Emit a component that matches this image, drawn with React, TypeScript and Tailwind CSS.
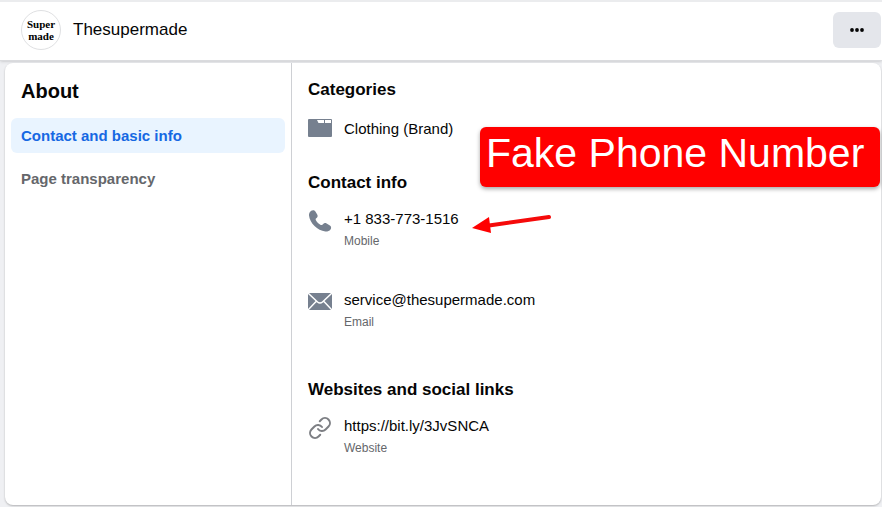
import React from 'react';
import { Link } from 'lucide-react';

interface InfoRowProps {
  icon: React.ReactNode;
  value: React.ReactNode;
  label?: string;
}

const FolderIcon = () => (
  <svg width="24" height="18" viewBox="0 0 24 18" fill="none" aria-hidden="true">
    <path d="M1 0h22a1 1 0 0 1 1 1v16a1 1 0 0 1-1 1H1a1 1 0 0 1-1-1V1a1 1 0 0 1 1-1Z" fill="#76808f" />
    <path d="M9 1h7v3h-5.500ZM17 1h6v3h-6Z" fill="#fff" />
  </svg>
);

const PhoneIcon = () => (
  <svg width="24" height="24" viewBox="0 0 24 24" aria-hidden="true">
    <path
      d="M3.200 1.800C4.500.800 6.500 1 7.400 2.400L9.200 5.400c.8 1.400.5 2.600-.6 3.500l-.7.7c-.4.5-.4 1 0 1.600 1.200 2 2.700 3.500 4.900 4.700.6.300 1.100.3 1.600-.1l.8-.8c.9-1 2.100-1.200 3.400-.4l3.300 2c1.400.9 1.600 2.700.6 3.900-1.200 1.500-3.200 2.200-5.200 2C9.600 21.900 1.700 14 1 6.600.800 4.700 1.700 2.900 3.200 1.800Z"
      fill="#76808f"
    />
  </svg>
);

const MailIcon = () => (
  <svg width="24" height="24" viewBox="0 0 24 24" fill="none" aria-hidden="true">
    <path d="M0 3h24v17H0Z" fill="#76808f" />
    <path d="m0 3 9.500 9q2.500 2 5 0L24 3M0 20l8.500-9M24 20l-8.500-9" stroke="#fff" strokeWidth="1.500" />
  </svg>
);

const InfoRow: React.FC<InfoRowProps> = ({ icon, value, label }) => (
  <div className="flex items-start gap-3">
    <span className="w-6 shrink-0">{icon}</span>
    <div>
      <p className="text-[15px] leading-5 text-[#050505]">{value}</p>
      {label && <p className="mt-1 text-xs leading-4 text-[#65676b]">{label}</p>}
    </div>
  </div>
);

const SectionTitle: React.FC<{ children: React.ReactNode }> = ({ children }) => (
  <h3 className="mb-4 text-[17px] leading-5 font-bold text-[#050505]">{children}</h3>
);

export default function App() {
  return (
    <div className="flex min-h-screen flex-col bg-[#eff0f3] font-['Liberation_Sans',Arial,sans-serif]">
      <header className="flex items-center justify-between border-t-2 border-b border-t-[#ebecee] border-b-[#dadbde] bg-white pt-2 pr-px pb-2.5 pl-[21px] shadow-sm">
        <div className="flex items-center gap-3">
          <div className="flex size-10 flex-col items-center justify-center rounded-full border border-[#dfe0e2] font-['Liberation_Serif',serif] text-[11px] leading-3 font-bold text-black">
            <span>Super</span>
            <span>made</span>
          </div>
          <h1 className="text-[17px] leading-5 text-[#050505]">Thesupermade</h1>
        </div>
        <button
          type="button"
          aria-label="More options"
          className="flex h-9 w-12 items-center justify-center rounded-md bg-[#e4e6eb]"
        >
          <svg width="14" height="4" viewBox="0 0 14 4" fill="#050505" aria-hidden="true">
            <circle cx="2" cy="2" r="1.900" />
            <circle cx="7" cy="2" r="1.900" />
            <circle cx="12" cy="2" r="1.900" />
          </svg>
        </button>
      </header>

      <main className="relative mt-0.5 mr-px mb-0.5 ml-[5px] flex grow rounded-lg bg-white shadow-[0_1px_2px_rgba(0,0,0,0.25)]">
        <aside className="w-[287px] shrink-0 border-r border-[#ced0d4] px-1.5 pt-4">
          <h2 className="px-2.5 text-xl leading-6 font-bold text-[#050505]">About</h2>
          <nav className="mt-[15px] flex flex-col gap-2 text-[15px] leading-[21px] font-bold">
            <a href="#contact" className="rounded-md bg-[#e9f4ff] px-2.5 py-[7px] text-[#1668e3]">
              Contact and basic info
            </a>
            <a href="#transparency" className="rounded-md px-2.5 py-[7px] text-[#65676b]">
              Page transparency
            </a>
          </nav>
        </aside>

        <div className="flex min-w-0 grow flex-col gap-[34px] px-4 pt-[17px] pb-8">
          <section>
            <SectionTitle>Categories</SectionTitle>
            <div className="pt-[3px]">
              <InfoRow icon={<FolderIcon />} value="Clothing (Brand)" />
            </div>
          </section>

          <section>
            <SectionTitle>Contact info</SectionTitle>
            <div className="flex flex-col gap-[41px]">
              <InfoRow icon={<PhoneIcon />} value="+1 833-773-1516" label="Mobile" />
              <InfoRow
                icon={<MailIcon />}
                value={<a href="mailto:service@thesupermade.com">service@thesupermade.com</a>}
                label="Email"
              />
            </div>
          </section>

          <section className="pt-4">
            <SectionTitle>Websites and social links</SectionTitle>
            <InfoRow
              icon={<Link size={24} color="#7d7f84" aria-hidden="true" />}
              value={<a href="https://bit.ly/3JvSNCA">https://bit.ly/3JvSNCA</a>}
              label="Website"
            />
          </section>
        </div>

        {/* callout over the contact details */}
        <p className="absolute top-16 right-px h-[60px] w-[400px] rounded-md bg-[#ff0000] px-1.5 text-[41px] leading-[52px] whitespace-nowrap text-white shadow-[0_2px_4px_rgba(0,0,0,0.35)]">
          Fake Phone Number
        </p>
        <svg className="absolute top-[150px] left-[466px]" width="84" height="24" viewBox="0 0 84 24" aria-hidden="true">
          <path d="M18 12.500 78 4" stroke="#f50a0a" strokeWidth="4" strokeLinecap="round" />
          <path d="M1 15 18 4l2 16Z" fill="#ff0000" />
        </svg>
      </main>
    </div>
  );
}
